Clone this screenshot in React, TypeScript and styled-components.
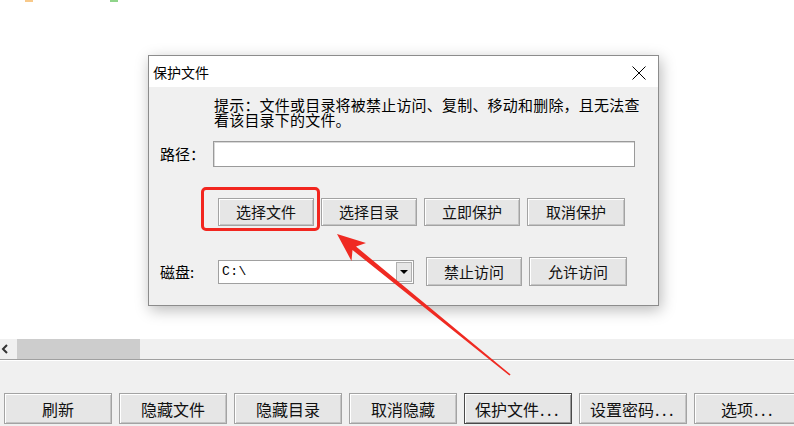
import React from "react";
import styled, { createGlobalStyle, css } from "styled-components";

const GlobalStyle = createGlobalStyle`
  html, body { margin: 0; padding: 0; background: #ffffff; }
  body { font-family: "Noto Sans CJK SC", "Noto Sans", sans-serif; color: #000; }
  #root { width: 794px; height: 426px; overflow: hidden; position: relative; }
`;

const Page = styled.div`
  width: 794px;
  height: 426px;
  display: flex;
  flex-direction: column;
  position: relative;
`;

const TopArea = styled.div`
  height: 339px;
  background: #ffffff;
  display: flex;
  flex-direction: column;
`;

const IconStrip = styled.div`
  height: 2px;
  display: flex;
  gap: 77px;
  padding-left: 25px;
`;

const IconBit = styled.div<{ $color: string }>`
  width: 8px;
  height: 2px;
  background: ${(p) => p.$color};
`;

const Dialog = styled.div`
  margin: 53px 0 0 148px;
  width: 509px;
  height: 249px;
  border: 1px solid #8c8c8c;
  background: #f0f0f0;
  box-shadow: 2px 4px 14px rgba(0, 0, 0, 0.28);
  display: flex;
  flex-direction: column;
`;

const TitleBar = styled.div`
  height: 31px;
  background: #ffffff;
  display: flex;
  align-items: center;
  justify-content: space-between;
  padding: 0 12px 0 4px;
  font-size: 14px;
  line-height: 16px;
`;

const CloseIcon = styled.svg`
  width: 14px;
  height: 14px;
  margin-top: 2px;
`;

const Body = styled.div`
  flex: 1;
  display: flex;
  flex-direction: column;
  padding: 10px 0 0 11px;
  font-size: 15px;
`;

const Hint = styled.div`
  padding-left: 54px;
  width: 430px;
  line-height: 15px;
  letter-spacing: 0.2px;
`;

const Row = styled.div<{ $top: number; $indent?: number }>`
  display: flex;
  align-items: center;
  margin-top: ${(p) => p.$top}px;
  padding-left: ${(p) => p.$indent ?? 0}px;
`;

const Label = styled.div<{ $w: number }>`
  width: ${(p) => p.$w}px;
  line-height: 18px;
`;

const TextInput = styled.div`
  width: 420px;
  height: 24px;
  background: #ffffff;
  border: 1px solid #9a9a9a;
  box-shadow: inset 1px 1px 0 #d8d8d8;
`;

const ButtonGroup = styled.div`
  display: flex;
  gap: 7px;
`;

const Btn = styled.div<{ $w?: number; $h?: number; $size?: number; $default?: boolean }>`
  width: ${(p) => p.$w ?? 96}px;
  height: ${(p) => p.$h ?? 28}px;
  box-sizing: border-box;
  display: flex;
  align-items: center;
  justify-content: center;
  background: #e6e6e6;
  border: 1px solid #a3a3a3;
  box-shadow: inset 1px 1px 0 #ffffff, inset -1px -1px 0 #c4c4c4;
  font-size: ${(p) => p.$size ?? 15}px;
  line-height: 18px;
  color: #111;
  position: relative;
  ${(p) =>
    p.$default &&
    css`
      border: 1px solid #4a4a4a;
      box-shadow: inset 1px 1px 0 #ffffff, inset -1px -1px 0 #9a9a9a, inset 0 0 0 2px #e6e6e6;
    `}
`;

const Highlighted = styled(Btn)`
  &::after {
    content: "";
    position: absolute;
    left: -18px;
    top: -12px;
    right: -7px;
    bottom: -6px;
    border: 3px solid #f2261f;
    border-radius: 5px;
  }
`;

const Dots = styled.span`
  letter-spacing: 2.5px;
  margin-left: 1px;
`;

const Combo = styled.div`
  width: 196px;
  height: 24px;
  box-sizing: border-box;
  margin-left: 5px;
  margin-right: 12px;
  background: #ffffff;
  border: 1px solid #a0a0a0;
  display: flex;
  align-items: stretch;
`;

const ComboText = styled.div`
  flex: 1;
  font-family: "Liberation Mono", "DejaVu Sans Mono", monospace;
  font-size: 13px;
  line-height: 22px;
  padding-left: 3px;
  letter-spacing: 0.5px;
`;

const ComboButton = styled.div`
  width: 16px;
  margin: 1px;
  background: #e6e6e6;
  border: 1px solid #b0b0b0;
  box-sizing: border-box;
  display: flex;
  align-items: center;
  justify-content: center;
`;

const Tri = styled.div`
  width: 0;
  height: 0;
  border-left: 4px solid transparent;
  border-right: 4px solid transparent;
  border-top: 4px solid #000;
`;

const ScrollRow = styled.div`
  height: 20px;
  background: #f0f0f0;
  display: flex;
  align-items: stretch;
`;

const ScrollArrow = styled.div`
  width: 17px;
  display: flex;
  align-items: center;
  padding-left: 1px;
  box-sizing: border-box;
`;

const ScrollThumb = styled.div`
  width: 123px;
  background: #cdcdcd;
`;

const Divider = styled.div`
  height: 1px;
  background: #a0a0a0;
  border-bottom: 1px solid #ffffff;
`;

const BottomArea = styled.div`
  flex: 1;
  background: #f0f0f0;
  padding: 32px 0 0 4px;
  display: flex;
`;

const Overlay = styled.svg`
  position: absolute;
  left: 0;
  top: 0;
  width: 794px;
  height: 426px;
  pointer-events: none;
`;

export default function App() {
  return (
    <>
      <GlobalStyle />
      <Page>
        <TopArea>
          <IconStrip>
            <IconBit $color="#f8c98a" />
            <IconBit $color="#8fd48a" />
          </IconStrip>
          <Dialog>
            <TitleBar>
              <span>保护文件</span>
              <CloseIcon viewBox="0 0 14 14">
                <path d="M0.5 0.5 L13.5 13.5 M13.5 0.5 L0.5 13.5" stroke="#000" strokeWidth="1" fill="none" />
              </CloseIcon>
            </TitleBar>
            <Body>
              <Hint>
                提示：文件或目录将被禁止访问、复制、移动和删除，且无法查看该目录下的文件。
              </Hint>
              <Row $top={14}>
                <Label $w={53}>路径：</Label>
                <TextInput />
              </Row>
              <Row $top={31} $indent={58}>
                <ButtonGroup>
                  <Highlighted>选择文件</Highlighted>
                  <Btn>选择目录</Btn>
                  <Btn>立即保护</Btn>
                  <Btn $w={98}>取消保护</Btn>
                </ButtonGroup>
              </Row>
              <Row $top={31}>
                <Label $w={53}>磁盘:</Label>
                <Combo>
                  <ComboText>C:\</ComboText>
                  <ComboButton>
                    <Tri />
                  </ComboButton>
                </Combo>
                <ButtonGroup>
                  <Btn $h={29}>禁止访问</Btn>
                  <Btn $h={29} $w={98}>允许访问</Btn>
                </ButtonGroup>
              </Row>
            </Body>
          </Dialog>
        </TopArea>
        <ScrollRow>
          <ScrollArrow>
            <svg width="8" height="10" viewBox="0 0 8 10">
              <path d="M6 1 L2 5 L6 9" stroke="#333" strokeWidth="2" fill="none" />
            </svg>
          </ScrollArrow>
          <ScrollThumb />
        </ScrollRow>
        <Divider />
        <BottomArea>
          <ButtonGroup>
            <Btn $w={108} $h={31} $size={16}>刷新</Btn>
            <Btn $w={108} $h={31} $size={16}>隐藏文件</Btn>
            <Btn $w={108} $h={31} $size={16}>隐藏目录</Btn>
            <Btn $w={108} $h={31} $size={16}>取消隐藏</Btn>
            <Btn $w={108} $h={31} $size={16} $default>
              保护文件<Dots>...</Dots>
            </Btn>
            <Btn $w={108} $h={31} $size={16}>
              设置密码<Dots>...</Dots>
            </Btn>
            <Btn $w={108} $h={31} $size={16}>
              选项<Dots>...</Dots>
            </Btn>
          </ButtonGroup>
        </BottomArea>
        <Overlay viewBox="0 0 794 426">
          <polygon
            points="337,234 366,243 356,246.5 510.6,374.5 509.4,375.5 352.5,250 351.5,261"
            fill="#ef2a22"
          />
        </Overlay>
      </Page>
    </>
  );
}
